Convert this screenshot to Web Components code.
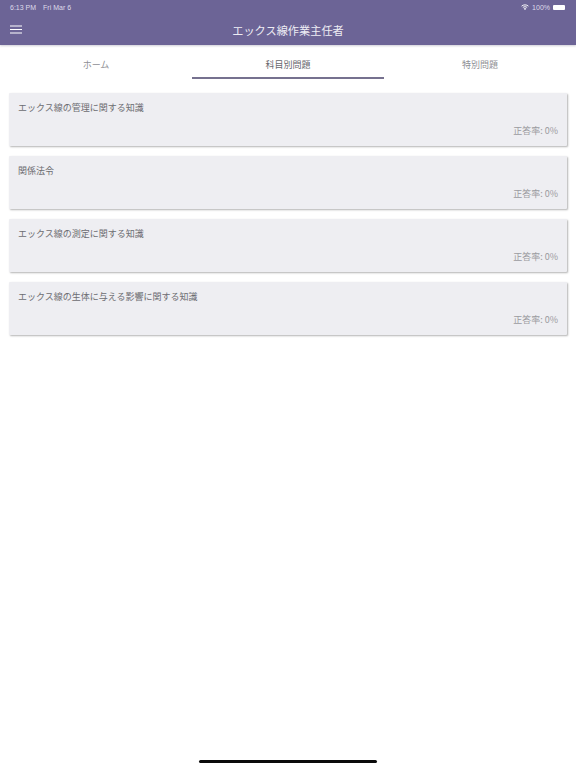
<!DOCTYPE html>
<html lang="ja">
<head>
<meta charset="utf-8">
<title>エックス線作業主任者</title>
<style>
    html, body {
        margin: 0;
        height: 100%;
        background: #fff;
        font-family: "Noto Sans CJK JP", "Liberation Sans", sans-serif;
    }
    body {
        display: flex;
        flex-direction: column;
        height: 768px;
        overflow: hidden;
    }
</style>
</head>
<body>
<app-header title-text="エックス線作業主任者"></app-header>
<tab-bar>
    <tab-item>ホーム</tab-item>
    <tab-item active>科目別問題</tab-item>
    <tab-item>特別問題</tab-item>
</tab-bar>
<card-list>
    <subject-card rate="0%">エックス線の管理に関する知識</subject-card>
    <subject-card rate="0%">関係法令</subject-card>
    <subject-card rate="0%">エックス線の測定に関する知識</subject-card>
    <subject-card rate="0%">エックス線の生体に与える影響に関する知識</subject-card>
</card-list>
<home-indicator></home-indicator>
<script>
/**
 * Purple bar with the status line, the menu icon and the title.
 */
class AppHeader extends HTMLElement {
    constructor() {
        super();
        this.shadow = this.attachShadow({ mode: "open" });
    }

    connectedCallback() {
        this.shadow.innerHTML = `
        <style>
            :host {
                display: block;
                height: 45px;
                flex: none;
                background: #6c6496;
                color: #fff;
                box-shadow: 0 1px 2px rgba(60, 55, 90, 0.25);
                position: relative;
            }
            #status {
                display: flex;
                justify-content: space-between;
                align-items: center;
                height: 14px;
                padding: 0 10px;
                font: 7px "Liberation Sans", sans-serif;
                color: #dedbea;
            }
            #status-left span { margin-right: 7px; }
            #status-right { display: flex; align-items: center; gap: 3px; }
            #battery {
                width: 12px;
                height: 5px;
                background: #fff;
                border-radius: 1px;
                margin-right: 1px;
            }
            #bar {
                display: grid;
                grid-template-columns: 52px 1fr 52px;
                align-items: center;
                height: 31px;
            }
            svg#menu { margin-left: 10px; display: block; }
            #title {
                text-align: center;
                font-size: 11.2px;
                color: #eeedf4;
            }
        </style>
        <div id="status">
            <div id="status-left"><span>6:13 PM</span><span>Fri Mar 6</span></div>
            <div id="status-right">
                <svg width="8" height="6" viewBox="0 0 18 14"><path fill="none" stroke="#fff" stroke-width="2.2" d="M1 5C5.5 1 12.5 1 17 5M4 8.2C7 5.8 11 5.8 14 8.2"/><path fill="#fff" d="M9 14 6 10.8C8 9.6 10 9.6 12 10.8Z"/></svg>
                <span>100%</span>
                <div id="battery"></div>
            </div>
        </div>
        <div id="bar">
            <svg id="menu" width="12" height="9" viewBox="0 0 12 9"><path stroke="#fff" stroke-width="1.2" d="M0 1h12M0 4.5h12M0 8h12"/></svg>
            <div id="title">${this.getAttribute("title-text")}</div>
            <div></div>
        </div>
        `;
    }
}
customElements.define("app-header", AppHeader);

/**
 * Row of equal tabs.
 */
class TabBar extends HTMLElement {
    constructor() {
        super();
        this.shadow = this.attachShadow({ mode: "open" });
        this.shadow.innerHTML = `
        <style>
            :host {
                display: grid;
                grid-template-columns: repeat(3, 1fr);
                height: 34px;
                flex: none;
            }
        </style>
        <slot></slot>
        `;
    }
}
customElements.define("tab-bar", TabBar);

/**
 * A single tab, underlined when it has the `active` attribute.
 */
class TabItem extends HTMLElement {
    constructor() {
        super();
        this.shadow = this.attachShadow({ mode: "open" });
        this.shadow.innerHTML = `
        <style>
            :host {
                display: flex;
                align-items: center;
                justify-content: center;
                box-sizing: border-box;
                padding-top: 6px;
                border-bottom: 2px solid transparent;
                font-size: 9px;
                color: #8f8f95;
            }
            :host([active]) {
                color: #66666c;
                border-bottom-color: #76718f;
            }
        </style>
        <slot></slot>
        `;
    }
}
customElements.define("tab-item", TabItem);

/**
 * Vertical list holding the subject cards.
 */
class CardList extends HTMLElement {
    constructor() {
        super();
        this.shadow = this.attachShadow({ mode: "open" });
        this.shadow.innerHTML = `
        <style>
            :host {
                display: flex;
                flex-direction: column;
                gap: 10px;
                flex: 1;
                padding: 14px 9px 0;
            }
        </style>
        <slot></slot>
        `;
    }
}
customElements.define("card-list", CardList);

/**
 * Card with a subject name and the rate of correct answers.
 */
class SubjectCard extends HTMLElement {
    constructor() {
        super();
        this.shadow = this.attachShadow({ mode: "open" });
    }

    connectedCallback() {
        this.shadow.innerHTML = `
        <style>
            :host {
                display: flex;
                flex-direction: column;
                justify-content: space-between;
                box-sizing: border-box;
                height: 53px;
                padding: 8px 9px 9px 9px;
                background: #eeeef2;
                border-radius: 1px;
                box-shadow: 1px 1px 2px rgba(0, 0, 0, 0.3);
                font-size: 9px;
                line-height: 13px;
                color: #6c6c71;
            }
            #rate {
                text-align: right;
                color: #9b9ba0;
            }
        </style>
        <div><slot></slot></div>
        <div id="rate">正答率: ${this.getAttribute("rate")}</div>
        `;
    }
}
customElements.define("subject-card", SubjectCard);

/**
 * Black bar at the bottom of the screen.
 */
class HomeIndicator extends HTMLElement {
    constructor() {
        super();
        this.shadow = this.attachShadow({ mode: "open" });
        this.shadow.innerHTML = `
        <style>
            :host {
                display: flex;
                justify-content: center;
                flex: none;
                height: 8px;
            }
            div {
                width: 178px;
                height: 3px;
                border-radius: 2px;
                background: #0a0a0a;
            }
        </style>
        <div></div>
        `;
    }
}
customElements.define("home-indicator", HomeIndicator);
</script>
</body>
</html>
